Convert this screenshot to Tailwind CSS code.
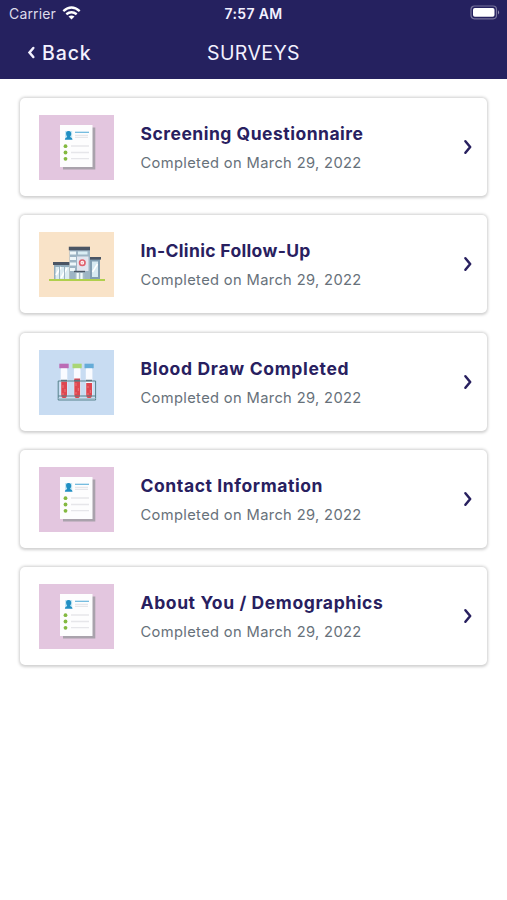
<!DOCTYPE html>
<html lang="en">
<head>
<meta charset="utf-8">
<title>Surveys</title>
<script src="https://cdn.jsdelivr.net/npm/@tailwindcss/browser@4"></script>
</head>
<body class="min-h-screen bg-white font-['Inter','Liberation_Sans',sans-serif]">
<svg class="hidden">
  <symbol id="survey" viewBox="0 0 75 65">
    <rect width="75" height="65" fill="#e3c6df"/>
    <rect x="24" y="12.5" width="32.3" height="42" fill="#a9a2ac"/>
    <rect x="21" y="10" width="32.5" height="42" fill="#fdfdfe"/>
    <rect x="26" y="16" width="7.2" height="8" fill="#c8e8f5"/>
    <path d="M29.6 16c2 0 2.8 1.3 2.6 3.2-.1 1.300-.7 1.800-1 2.200 0 1.200 2.200.8 2.300 3.300h-7.600c.1-2.500 2.200-2.100 2.200-3.300-.5-.5-.9-1.200-1-2.300-.2-1.900.6-3.100 2.500-3.100z" fill="#218fc3"/>
    <path d="M36 17.300h14" stroke="#67b5dc" stroke-width="1.200"/>
    <path d="M36 20.300h13M36 22.300h13M32 31h18M32 37.500h18M32 43.700h18" stroke="#e6e6ea" stroke-width="1.300"/>
    <g fill="#83b940"><circle cx="26.500" cy="31.200" r="1.900"/><circle cx="26.500" cy="37.500" r="1.900"/><circle cx="26.500" cy="43.800" r="1.900"/></g>
  </symbol>
  <symbol id="clinic" viewBox="0 0 75 65">
    <rect width="75" height="65" fill="#f9e3c8"/>
    <rect x="15" y="33" width="15.500" height="14.500" fill="#93adbd"/>
    <rect x="16.500" y="35" width="13.500" height="12" fill="#dcecf2"/>
    <path d="M17 43l5-8M22 46l6-10" stroke="#fff" stroke-width="1.800"/>
    <path d="M20.500 35v12M25.500 35v12" stroke="#8ba6b6" stroke-width=".8"/>
    <rect x="14" y="30" width="16.500" height="3" fill="#4b5564"/>
    <rect x="51" y="27" width="10" height="20.500" fill="#819eb2"/>
    <rect x="53" y="29.500" width="6" height="15.500" fill="#d7eaf2"/>
    <path d="M53.500 40l5-8" stroke="#fff" stroke-width="1.500"/>
    <rect x="51" y="25" width="11" height="2.600" fill="#4b5564"/>
    <rect x="30.500" y="18" width="20.500" height="29.500" fill="#9db4c4"/>
    <path d="M31 21h6M31 26.500h6M31 32h6M31 37.500h5" stroke="#eef7fa" stroke-width="3"/>
    <path d="M39 21h9.500" stroke="#d9edf4" stroke-width="3"/>
    <rect x="38" y="24.500" width="11.500" height="14.500" fill="#e2e5ef"/>
    <rect x="29.800" y="14.700" width="21.200" height="3.600" fill="#4b5564"/>
    <circle cx="43.300" cy="30.700" r="2.700" fill="#fff" stroke="#e0606d" stroke-width="1.700"/>
    <path d="M42.300 30.700h2M43.300 29.700v2" stroke="#ec9da2" stroke-width=".6"/>
    <rect x="36" y="39" width="9.500" height="8.500" fill="#a8bcc8"/>
    <path d="M38.700 41v6M42.500 41v6" stroke="#f3fafc" stroke-width="2.300"/>
    <path d="M35 39.500h11" stroke="#4b5564" stroke-width="1.400"/>
    <path d="M10 48h56" stroke="#b0cf4d" stroke-width="1.800"/>
  </symbol>
  <symbol id="blood" viewBox="0 0 75 65">
    <rect width="75" height="65" fill="#c8dcf2"/>
    <g fill="#f9fbff"><rect x="21.700" y="17" width="6.600" height="31" rx="3"/><rect x="34.900" y="17" width="6.600" height="31" rx="3"/><rect x="46.800" y="17" width="6.600" height="31" rx="3"/></g>
    <g fill="#de4650"><path d="M22.200 31.500h5.800v13.700a2.900 2.900 0 0 1-5.800 0zM35.300 28.500h5.800v16.700a2.900 2.900 0 0 1-5.800 0zM47.200 33h5.800v12.200a2.900 2.900 0 0 1-5.800 0z"/></g>
    <path d="M24 35v3M26 39v3M24 43v2M37 33v3M39.300 38v3M37 42v2M49 36v2M51.300 40v3M49 43v2" stroke="#ea7478" stroke-width="1"/>
    <rect x="20.300" y="13.700" width="9.400" height="4.500" fill="#bb6bb5"/>
    <rect x="33.500" y="13.700" width="9.200" height="4.500" fill="#a9d675"/>
    <rect x="45.500" y="13.700" width="9.200" height="4.500" fill="#65acd8"/>
    <path d="M19.200 31h37.400v19H19.200zM19.200 46h37.400" fill="none" stroke="#56818b" stroke-width="1"/>
    <path d="M19.500 48.500h37" stroke="#a9c5d2" stroke-width="1"/>
    <path d="M22 30.500h6M35 30.500h6M47 30.500h6" stroke="#5b7580" stroke-width="1.600"/>
  </symbol>
  <symbol id="chevron" viewBox="0 0 10 16">
    <path d="M2.400 2.300l4.800 5.700-4.800 5.700" fill="none" stroke="#28205f" stroke-width="2.500" stroke-linecap="round" stroke-linejoin="round"/>
  </symbol>
</svg>

<header class="h-[79px] bg-[#25215f] text-[#f3f1ff] border-b border-[#25215f]">
  <div class="grid grid-cols-3 items-center h-[27px] pl-[9px] pr-[7px]">
    <div class="flex items-center gap-[6px]">
      <span class="text-[14px] leading-5 tracking-[0.16px] text-[#dddbea]">Carrier</span>
      <svg class="w-[19px] h-[14px] -mt-[2px]" viewBox="0 0 19 14" fill="none" stroke="#fff" stroke-width="2.400">
        <path d="M1.300 5.100q8.200-7 16.400 0M4.300 8.300q5.200-4.200 10.400 0"/>
        <path d="M6.500 10.500q3-2.200 6 0l-3 3z" fill="#fff" stroke="none"/>
      </svg>
    </div>
    <div class="text-center text-[14px] leading-5 font-semibold tracking-[0.35px] -ml-[2px]">7:57 AM</div>
    <svg class="w-[30px] h-[15px] -mt-[2px] justify-self-end" viewBox="0 0 30 15">
      <rect x="1" y="1" width="25.500" height="12.800" rx="3.500" fill="none" stroke="#77739c" stroke-width="1.200"/>
      <rect x="3" y="3" width="21.500" height="8.800" rx="1.800" fill="#fff"/>
      <path d="M28 5.300q2.200 2.200 0 4.300z" fill="#9692b3"/>
    </svg>
  </div>
  <div class="grid grid-cols-3 items-center h-[51px] pl-[27px] pr-[27px]">
    <div class="flex items-center gap-[6px]">
      <svg class="w-[9px] h-[14px]" viewBox="0 0 9 14"><path d="M6.300 2L2.500 6.500l3.800 4.500" fill="none" stroke="#f3f1ff" stroke-width="2.500" stroke-linecap="round"/></svg>
      <span class="text-[19.500px] leading-6 font-medium tracking-[0.9px]">Back</span>
    </div>
    <h1 class="text-center text-[19.500px] leading-6 tracking-[0.400px]">SURVEYS</h1>
  </div>
</header>

<main class="flex flex-col gap-[19.300px] px-[20px] pt-[19px] pb-10">
  <a class="flex items-center h-[98px] rounded-[5px] bg-white pl-[18.500px] pr-[14px] shadow-[0_0.5px_3px_1px_rgba(0,0,0,0.19)]">
    <svg class="w-[75px] h-[65px] mt-px shrink-0"><use href="#survey"/></svg>
    <div class="flex-1 pl-[27px] pt-[2px] whitespace-nowrap">
      <h2 class="text-[17.500px] leading-[30px] font-bold text-[#28205f] tracking-[0.500px]">Screening Questionnaire</h2>
      <p class="text-[14.700px] leading-[28px] text-[#67717a] tracking-[0.350px]">Completed on March 29, 2022</p>
    </div>
    <svg class="w-[10px] h-[16px] shrink-0"><use href="#chevron"/></svg>
  </a>
  <a class="flex items-center h-[98px] rounded-[5px] bg-white pl-[18.500px] pr-[14px] shadow-[0_0.5px_3px_1px_rgba(0,0,0,0.19)]">
    <svg class="w-[75px] h-[65px] mt-px shrink-0"><use href="#clinic"/></svg>
    <div class="flex-1 pl-[27px] pt-[2px] whitespace-nowrap">
      <h2 class="text-[17.500px] leading-[30px] font-bold text-[#28205f] tracking-[0.330px]">In-Clinic Follow-Up</h2>
      <p class="text-[14.700px] leading-[28px] text-[#67717a] tracking-[0.350px]">Completed on March 29, 2022</p>
    </div>
    <svg class="w-[10px] h-[16px] shrink-0"><use href="#chevron"/></svg>
  </a>
  <a class="flex items-center h-[98px] rounded-[5px] bg-white pl-[18.500px] pr-[14px] shadow-[0_0.5px_3px_1px_rgba(0,0,0,0.19)]">
    <svg class="w-[75px] h-[65px] mt-px shrink-0"><use href="#blood"/></svg>
    <div class="flex-1 pl-[27px] pt-[2px] whitespace-nowrap">
      <h2 class="text-[17.500px] leading-[30px] font-bold text-[#28205f] tracking-[0.680px]">Blood Draw Completed</h2>
      <p class="text-[14.700px] leading-[28px] text-[#67717a] tracking-[0.350px]">Completed on March 29, 2022</p>
    </div>
    <svg class="w-[10px] h-[16px] shrink-0"><use href="#chevron"/></svg>
  </a>
  <a class="flex items-center h-[98px] rounded-[5px] bg-white pl-[18.500px] pr-[14px] shadow-[0_0.5px_3px_1px_rgba(0,0,0,0.19)]">
    <svg class="w-[75px] h-[65px] mt-px shrink-0"><use href="#survey"/></svg>
    <div class="flex-1 pl-[27px] pt-[2px] whitespace-nowrap">
      <h2 class="text-[17.500px] leading-[30px] font-bold text-[#28205f] tracking-[0.590px]">Contact Information</h2>
      <p class="text-[14.700px] leading-[28px] text-[#67717a] tracking-[0.350px]">Completed on March 29, 2022</p>
    </div>
    <svg class="w-[10px] h-[16px] shrink-0"><use href="#chevron"/></svg>
  </a>
  <a class="flex items-center h-[98px] rounded-[5px] bg-white pl-[18.500px] pr-[14px] shadow-[0_0.5px_3px_1px_rgba(0,0,0,0.19)]">
    <svg class="w-[75px] h-[65px] mt-px shrink-0"><use href="#survey"/></svg>
    <div class="flex-1 pl-[27px] pt-[2px] whitespace-nowrap">
      <h2 class="text-[17.500px] leading-[30px] font-bold text-[#28205f] tracking-[0.600px]">About You / Demographics</h2>
      <p class="text-[14.700px] leading-[28px] text-[#67717a] tracking-[0.350px]">Completed on March 29, 2022</p>
    </div>
    <svg class="w-[10px] h-[16px] shrink-0"><use href="#chevron"/></svg>
  </a>
</main>
</body>
</html>
